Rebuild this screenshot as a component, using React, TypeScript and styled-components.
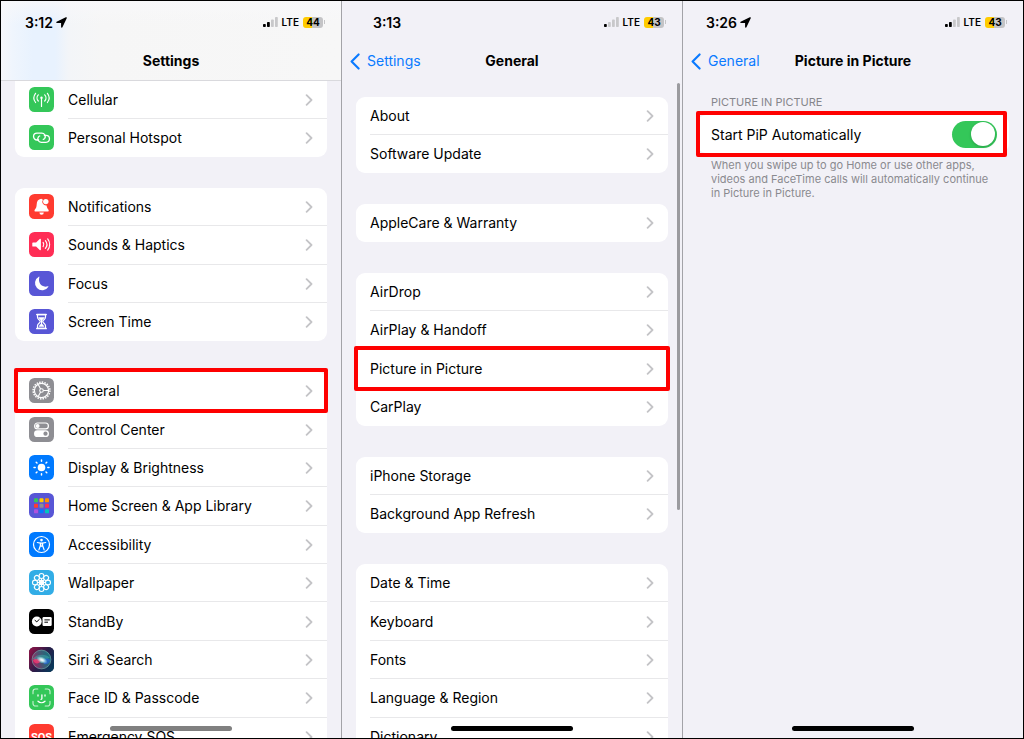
import React, { useState } from 'react';
import styled, { createGlobalStyle, css } from 'styled-components';

const GlobalStyle = createGlobalStyle`
  *, *::before, *::after { box-sizing: border-box; }
  body {
    margin: 0;
    background: #000;
    color: #000;
    font-family: Inter, "Liberation Sans", sans-serif;
    font-size: 14px;
    -webkit-font-smoothing: antialiased;
  }
  ul { list-style: none; margin: 0; padding: 0; }
  h1, h2, p { margin: 0; }
  a { color: inherit; text-decoration: none; }
`;

const Board = styled.div`
  display: grid;
  grid-template-columns: repeat(3, minmax(0, 1fr));
  gap: 1px;
  height: 100vh;
  border: 1px solid #000;
  background: #a3a3a8;
`;

const Screen = styled.section`
  position: relative;
  display: flex;
  flex-direction: column;
  min-width: 0;
  overflow: hidden;
  background: #f2f1f7;
`;

const TopBar = styled.header<{ $frosted?: boolean }>`
  flex: none;
  padding-top: 11px;
  border-bottom: 1px solid transparent;
  ${(p) =>
    p.$frosted &&
    css`
      background:
        linear-gradient(180deg, rgba(248, 248, 250, 0.8) 0, rgba(248, 248, 250, 0) 24px),
        linear-gradient(90deg, #f6f7fc 0, #eff5fd 12px, #e8f2fe 32px, #e8f2fe 54px, #f3f5f8 68px, #f6f6f6 100px, #f7f7f7 100%);
      border-bottom-color: #d9d9dd;
    `}
`;

const StatusBar = styled.div<{ $inset: number }>`
  display: flex;
  align-items: center;
  justify-content: space-between;
  height: 20px;
  padding: 0 16px 0 ${(p) => p.$inset}px;
`;

const Clock = styled.span`
  display: flex;
  align-items: center;
  gap: 3px;
  font-weight: 600;
`;

const StatusIcons = styled.span`
  display: flex;
  align-items: center;
  gap: 4px;
`;

const Carrier = styled.span`
  font-size: 10px;
  font-weight: 600;
`;

const BatteryWrap = styled.span`
  display: flex;
  align-items: center;
  gap: 1px;
  &::after {
    content: '';
    width: 1px;
    height: 4px;
    background: #c4c4c6;
  }
`;

const Battery = styled.span`
  display: flex;
  align-items: center;
  justify-content: center;
  width: 20px;
  height: 11px;
  border-radius: 3px;
  background: linear-gradient(90deg, #ffcc00 45%, #c4c4c6 45%);
  font-size: 10px;
  font-weight: 700;
  line-height: 11px;
`;

const NavBar = styled.nav`
  display: grid;
  grid-template-columns: 1fr auto 1fr;
  align-items: center;
  height: 38px;
  margin-top: 10px;
  padding: 0 8px;
`;

const NavTitle = styled.h1`
  grid-column: 2;
  font-size: 14px;
  font-weight: 700;
  line-height: 20px;
`;

const BackLink = styled.a`
  grid-column: 1;
  display: flex;
  align-items: center;
  gap: 7px;
  color: #0a7aff;
  line-height: 20px;
`;

const Content = styled.main<{ $top?: number }>`
  display: flex;
  flex: 1;
  flex-direction: column;
  gap: 31px;
  min-height: 0;
  padding: ${(p) => p.$top ?? 0}px 14px 0;
`;

// Five rows take 192px; the rows of a group share its height evenly.
const Group = styled.ul<{ $rows: number; $openTop?: boolean }>`
  display: grid;
  grid-auto-rows: 1fr;
  flex: none;
  min-height: ${(p) => Math.floor((p.$rows * 192) / 5)}px;
  border-radius: ${(p) => (p.$openTop ? '0 0 9px 9px' : '9px')};
  background: #fff;
`;

// $mark is the inset of the red frame round a highlighted row.
const Row = styled.li<{ $mark?: string }>`
  position: relative;
  display: flex;
  ${(p) =>
    p.$mark &&
    css`
      &::after {
        content: '';
        position: absolute;
        z-index: 1;
        inset: ${p.$mark};
        border: 4px solid #fe0000;
        border-radius: 2px;
        background: transparent;
        pointer-events: none;
      }
    `}
`;

const RowLink = styled.a`
  display: flex;
  flex: 1;
  min-width: 0;
  padding-left: 14px;
`;

const IconSlot = styled.span`
  display: flex;
  align-items: center;
  width: 39px;
  padding-bottom: 1px;
`;

const RowBody = styled.span<{ $divided: boolean }>`
  display: flex;
  flex: 1;
  align-items: center;
  justify-content: space-between;
  padding: 1px 14px 0 0;
  border-bottom: 1px solid ${(p) => (p.$divided ? '#e8e8ea' : 'transparent')};
  line-height: 20px;
  white-space: nowrap;
`;

const HomeIndicator = styled.div<{ $dim?: boolean }>`
  position: absolute;
  z-index: 2;
  bottom: 7px;
  left: 50%;
  width: 122px;
  height: 5px;
  border-radius: 3px;
  background: ${(p) => (p.$dim ? '#808080' : '#000')};
  transform: translateX(-50%);
`;

const ScrollThumb = styled.div`
  position: absolute;
  top: 82px;
  right: 2px;
  width: 3px;
  height: 427px;
  border-radius: 2px;
  background: #9b9b9f;
`;

const Section = styled.section`
  display: flex;
  flex-direction: column;
`;

const SectionLabel = styled.h2`
  padding: 0 14px;
  color: #86868b;
  font-size: 11px;
  font-weight: 400;
  line-height: 14px;
  margin-bottom: 6px;
`;

const SectionNote = styled.p`
  padding: 5px 14px 0;
  color: #8a8a8f;
  font-size: 11px;
  line-height: 14px;
`;

const SwitchRow = styled.label`
  display: flex;
  flex: 1;
  align-items: center;
  justify-content: space-between;
  padding: 0 12px 0 14px;
`;

const Switch = styled.input`
  appearance: none;
  display: flex;
  align-items: center;
  width: 45px;
  height: 27px;
  margin: 0;
  padding: 0 2px;
  border-radius: 14px;
  background: #e9e9ea;
  &::before {
    content: '';
    width: 24px;
    height: 24px;
    border-radius: 50%;
    background: #fff;
    box-shadow: 0 1px 3px rgba(0, 0, 0, 0.2);
  }
  &:checked {
    justify-content: flex-end;
    background: #34c759;
  }
`;

const Chevron = () => (
  <svg width="8" height="12" viewBox="0 0 8 12" fill="none" stroke="#c4c4c7" strokeWidth="1.8" strokeLinecap="round" strokeLinejoin="round" aria-hidden="true">
    <path d="M1.600 1.200 6.500 6 1.600 10.800" />
  </svg>
);

const BackChevron = () => (
  <svg width="10" height="17" viewBox="0 0 10 17" fill="none" stroke="#0a7aff" strokeWidth="2.1" strokeLinecap="round" strokeLinejoin="round" aria-hidden="true">
    <path d="M8.6 1.4 1.6 8.5l7 7.1" />
  </svg>
);

const LocationArrow = () => (
  <svg width="11" height="11" viewBox="0 0 11 11" aria-hidden="true">
    <path d="M10.100.9.900 5.300h4.900V10z" fill="#000" stroke="#000" strokeWidth="1.400" strokeLinejoin="round" />
  </svg>
);

const Signal = ({ level }: { level: number }) => (
  <svg width="15" height="10" viewBox="0 0 15 10" aria-hidden="true">
    {[3, 5, 7.5, 10].map((h, i) => (
      <rect key={h} x={i * 4} y={10 - h} width="2.8" height={h} rx=".8" fill={i < level ? '#000' : '#c8c8ca'} />
    ))}
  </svg>
);

const tiles: Record<string, [string, React.ReactNode]> = {
  cellular: [
    '#34c759',
    <g fill="none" stroke="#fff" strokeWidth="1.2" strokeLinecap="round">
      <path d="M12.5 11.5v8" />
      <circle cx="12.5" cy="10.800" r="1.200" fill="#fff" stroke="none" />
      <path d="M9.300 7.800a4.500 4.500 0 0 0 0 6.200M15.700 7.800a4.500 4.500 0 0 1 0 6.200M6.600 6.300a7.400 7.400 0 0 0 0 9.200M18.400 6.300a7.400 7.400 0 0 1 0 9.200" />
    </g>,
  ],
  hotspot: [
    '#34c759',
    <g fill="none" stroke="#fff" strokeWidth="1.3" strokeLinecap="round">
      <path d="M9.6 15H8a3.4 3.4 0 0 1 0-6.9h4.8a3.4 3.4 0 0 1 2.9 5.2 3.1 3.1 0 0 1-1.4 1.1" />
      <path d="M15.4 10.4H17a3.4 3.4 0 0 1 0 6.9h-4.8a3.4 3.4 0 0 1-2.9-5.2 3.1 3.1 0 0 1 1.4-1.1" />
    </g>,
  ],
  notifications: [
    '#ff3b30',
    <g fill="#fff">
      <path d="M12.2 4.8c-3.2.4-4.4 2.7-4.5 5.4-.1 2.8-.7 4-1.8 5.3-.8 1-.4 2.1.7 2.1h12c1.1 0 1.5-1.1.7-2.1-.9-1.1-1.5-2.1-1.7-4a3.8 3.8 0 0 1-3.7-5.8z" />
      <path d="M10.4 18.6h4.4a2.2 2.2 0 0 1-4.4 0z" />
      <circle cx="16.8" cy="7.6" r="2.7" />
    </g>,
  ],
  sounds: [
    '#ff2d55',
    <g>
      <path d="M4 10.4h3.1l3.6-3.3c.6-.5 1.2-.2 1.2.5v9.8c0 .7-.6 1-1.2.5l-3.6-3.3H4a.7.7 0 0 1-.7-.7v-2.8a.7.7 0 0 1 .7-.7z" fill="#fff" />
      <path d="M14.1 10.4a3.6 3.6 0 0 1 0 4.2M16.4 8.6a6.2 6.2 0 0 1 0 7.8M18.7 6.9a9.2 9.2 0 0 1 0 11.2" fill="none" stroke="#fff" strokeWidth="1.2" strokeLinecap="round" />
    </g>,
  ],
  focus: [
    '#5856d6',
    <path d="M9.8 5.7a7.2 7.2 0 1 0 9.6 10c.2-.4-.1-.7-.5-.5-5.700 2-10.300-3-8.500-9.100.1-.4-.2-.7-.6-.4z" fill="#fff" />,
  ],
  screentime: [
    '#5856d6',
    <g>
      <path d="M8.500 5.700h8v2.600c0 2-2.800 2.700-2.800 4.200s2.800 2.200 2.800 4.200v2.600h-8v-2.600c0-2 2.800-2.700 2.800-4.200s-2.800-2.200-2.800-4.200z" fill="none" stroke="#fff" strokeWidth="1.200" />
      <path d="M7.900 5.500h9.200M7.900 19.500h9.200" stroke="#fff" strokeWidth="1.700" strokeLinecap="round" />
      <path d="M9.200 8.300h6.600c-.6 1.700-2.600 2.200-2.800 4v2.200c.3.900 1.900 1.500 2.300 3.300H9.700c.4-1.800 2-2.400 2.300-3.300v-2.200c-.2-1.800-2.200-2.300-2.800-4z" fill="#fff" />
    </g>,
  ],
  general: [
    '#8e8e93',
    <g fill="none" stroke="#fff">
      <circle cx="12.500" cy="12.500" r="8.400" strokeWidth="1.500" strokeDasharray="1.500 1.139" />
      <circle cx="12.500" cy="12.500" r="7.100" strokeWidth="1.200" />
      <circle cx="12.500" cy="12.500" r="1.800" strokeWidth="1.100" />
      <path d="M14.300 12.500h5M11.600 10.900 9.200 6.600M11.600 14.100l-2.400 4.300" strokeWidth="1.100" />
    </g>,
  ],
  control: [
    '#8e8e93',
    <g>
      <rect x="5.600" y="6" width="13.800" height="5.800" rx="2.900" fill="none" stroke="#fff" strokeWidth="1.200" />
      <circle cx="8.600" cy="8.900" r="2" fill="#fff" />
      <rect x="5" y="13.200" width="15" height="6.900" rx="3.450" fill="#fff" />
      <circle cx="16.500" cy="16.650" r="2.100" fill="#8e8e93" />
    </g>,
  ],
  display: [
    '#007aff',
    <g stroke="#fff" strokeWidth="1.500" strokeLinecap="round">
      <circle cx="12.500" cy="12.500" r="3.800" fill="#fff" stroke="none" />
      <path d="M12.500 5v1.200M12.500 18.800v1.200M5 12.500h1.200M18.800 12.500h1.200M7.200 7.200l.8.800M17 17l.8.800M7.200 17.800l.8-.8M17 8l.8-.8" />
    </g>,
  ],
  home: [
    '#5856d6',
    <g>
      {['#34c759', '#ffcc00', '#ff9500', '#ff3b30', '#8e8e93', '#ff2d55', '#af52de', '#007aff', '#00c7be'].map((c, i) => (
        <rect key={c} x={5 + (i % 3) * 5.500} y={5.300 + Math.floor(i / 3) * 5.500} width="4" height="4" rx=".9" fill={c} />
      ))}
    </g>,
  ],
  accessibility: [
    '#007aff',
    <g fill="none" stroke="#fff" strokeLinecap="round" strokeLinejoin="round">
      <circle cx="12.500" cy="12.500" r="8" strokeWidth="1.200" />
      <circle cx="12.500" cy="8.100" r="1.300" fill="#fff" stroke="none" />
      <path d="M8.300 10.500l3.100.6v2.400l-1.500 4.400M16.700 10.500l-3.100.6v2.400l1.500 4.400M11.600 11.100h1.800v3h-1.800z" strokeWidth="1.200" />
    </g>,
  ],
  wallpaper: [
    '#32ade6',
    <g fill="none" stroke="#fff" strokeWidth="1.100">
      {[0, 45, 90, 135, 180, 225, 270, 315].map((a) => (
        <g key={a} transform={`rotate(${a} 12.500 12.500)`}>
          <ellipse cx="12.500" cy="6" rx="2.400" ry="2.500" />
          <path d="M12.500 8.500v4" />
        </g>
      ))}
      <circle cx="12.500" cy="12.500" r="2.200" />
    </g>,
  ],
  standby: [
    '#000',
    <g>
      <circle cx="7.800" cy="12.500" r="4.900" fill="#fff" />
      <path d="m6 11.400 1.800 1.400 2.500-2.400" fill="none" stroke="#000" strokeWidth="1" strokeLinecap="round" />
      <rect x="13.500" y="8" width="9.200" height="9" rx="1.200" fill="#fff" />
      <path d="M15.400 10.900h5.400M15.400 13.200h3.600" stroke="#000" strokeWidth="1" />
    </g>,
  ],
  siri: [
    '#20183a',
    <g>
      <defs>
        <linearGradient id="siriBack" x1="0" y1=".2" x2="1" y2=".8">
          <stop offset="0" stopColor="#8a1346" />
          <stop offset=".5" stopColor="#2a1b48" />
          <stop offset="1" stopColor="#063a5a" />
        </linearGradient>
        <linearGradient id="siriOrb" x1="0" y1=".7" x2="1" y2=".3">
          <stop offset="0" stopColor="#c82468" />
          <stop offset=".45" stopColor="#4f6580" />
          <stop offset="1" stopColor="#128f92" />
        </linearGradient>
        <radialGradient id="siriGlow">
          <stop offset="0" stopColor="#fff" />
          <stop offset=".35" stopColor="#eff" stopOpacity=".8" />
          <stop offset="1" stopColor="#9ff" stopOpacity="0" />
        </radialGradient>
      </defs>
      <rect width="25" height="25" rx="5.500" fill="url(#siriBack)" />
      <circle cx="12.500" cy="12.500" r="9.400" fill="url(#siriOrb)" opacity=".75" />
      <circle cx="12.500" cy="12.500" r="9.400" fill="none" stroke="#6fa8a8" strokeWidth=".8" opacity=".8" />
      <path d="M3.500 12c4-5 13-6 17.500-1-4 .5-6 5-9 5s-5-3-8.500-4z" fill="#3fc6bd" opacity=".4" />
      <path d="M14 13c3-2.500 6-1.500 7.500 0-1 3.500-4 5-6.500 4z" fill="#2565d8" opacity=".7" />
      <path d="M4 13.500c2-2 5-2 8 .5-2 3-6 3.500-8-.5z" fill="#ff3570" opacity=".75" />
      <ellipse cx="13" cy="13" rx="6" ry="3.200" transform="rotate(25 13 13)" fill="url(#siriGlow)" />
    </g>,
  ],
  faceid: [
    '#34c759',
    <g fill="none" stroke="#fff" strokeWidth="1.100" strokeLinecap="round">
      <path d="M4 8.800V6.500A2.500 2.500 0 0 1 6.500 4h2.300M16.200 4h2.300A2.500 2.500 0 0 1 21 6.500v2.300M21 16.200v2.300a2.500 2.500 0 0 1-2.500 2.500h-2.300M8.800 21H6.500A2.500 2.500 0 0 1 4 18.500v-2.300" opacity=".75" />
      <path d="M9 9.800v1.200M16 9.800v1.200M12.900 9.800v3.700c0 .5-.3.800-.9.800M9 16.200c2 1.900 5 1.900 7 0" strokeWidth="1.300" />
    </g>,
  ],
  sos: [
    '#ff3b30',
    <text x="12.500" y="17" textAnchor="middle" fill="#fff" fontFamily="Roboto, sans-serif" fontSize="11" fontWeight="700">SOS</text>,
  ],
};

const Tile = ({ name }: { name: string }) => {
  const [color, art] = tiles[name];
  return (
    <svg width="25" height="25" viewBox="0 0 25 25" aria-hidden="true">
      <rect width="25" height="25" rx="5.500" fill={color} />
      {art}
    </svg>
  );
};

type Item = { label: string; icon?: string; mark?: string };

const settingsGroups: Item[][] = [
  [
    { label: 'Cellular', icon: 'cellular' },
    { label: 'Personal Hotspot', icon: 'hotspot' },
  ],
  [
    { label: 'Notifications', icon: 'notifications' },
    { label: 'Sounds & Haptics', icon: 'sounds' },
    { label: 'Focus', icon: 'focus' },
    { label: 'Screen Time', icon: 'screentime' },
  ],
  [
    { label: 'General', icon: 'general', mark: '-4px -1px -3px' },
    { label: 'Control Center', icon: 'control' },
    { label: 'Display & Brightness', icon: 'display' },
    { label: 'Home Screen & App Library', icon: 'home' },
    { label: 'Accessibility', icon: 'accessibility' },
    { label: 'Wallpaper', icon: 'wallpaper' },
    { label: 'StandBy', icon: 'standby' },
    { label: 'Siri & Search', icon: 'siri' },
    { label: 'Face ID & Passcode', icon: 'faceid' },
    { label: 'Emergency SOS', icon: 'sos' },
  ],
];

const generalGroups: Item[][] = [
  [{ label: 'About' }, { label: 'Software Update' }],
  [{ label: 'AppleCare & Warranty' }],
  [{ label: 'AirDrop' }, { label: 'AirPlay & Handoff' }, { label: 'Picture in Picture', mark: '-4px -2px -3px' }, { label: 'CarPlay' }],
  [{ label: 'iPhone Storage' }, { label: 'Background App Refresh' }],
  [{ label: 'Date & Time' }, { label: 'Keyboard' }, { label: 'Fonts' }, { label: 'Language & Region' }, { label: 'Dictionary' }],
];

const ItemGroup = ({ items, openTop }: { items: Item[]; openTop?: boolean }) => (
  <Group $rows={items.length} $openTop={openTop}>
    {items.map((item, i) => (
      <Row key={item.label} $mark={item.mark}>
        <RowLink href="#">
          {item.icon && (
            <IconSlot>
              <Tile name={item.icon} />
            </IconSlot>
          )}
          <RowBody $divided={i < items.length - 1}>
            {item.label}
            <Chevron />
          </RowBody>
        </RowLink>
      </Row>
    ))}
  </Group>
);

type HeaderProps = {
  time: string;
  inset: number;
  level: number;
  battery: number;
  title: string;
  back?: string;
  located?: boolean;
  frosted?: boolean;
};

const Header = ({ time, inset, level, battery, title, back, located, frosted }: HeaderProps) => (
  <TopBar $frosted={frosted}>
    <StatusBar $inset={inset}>
      <Clock>
        {time}
        {located && <LocationArrow />}
      </Clock>
      <StatusIcons>
        <Signal level={level} />
        <Carrier>LTE</Carrier>
        <BatteryWrap>
          <Battery>{battery}</Battery>
        </BatteryWrap>
      </StatusIcons>
    </StatusBar>
    <NavBar>
      {back && (
        <BackLink href="#">
          <BackChevron />
          {back}
        </BackLink>
      )}
      <NavTitle>{title}</NavTitle>
    </NavBar>
  </TopBar>
);

export default function App() {
  const [autoStart, setAutoStart] = useState(true);
  return (
    <>
      <GlobalStyle />
      <Board>
        <Screen>
          <Header time="3:12" inset={24} level={2} battery={44} title="Settings" located frosted />
          <Content>
            {settingsGroups.map((items, i) => (
              <ItemGroup key={items[0].label} items={items} openTop={i === 0} />
            ))}
          </Content>
          <HomeIndicator $dim />
        </Screen>

        <Screen>
          <Header time="3:13" inset={31} level={1} battery={43} title="General" back="Settings" />
          <Content $top={16}>
            {generalGroups.map((items) => (
              <ItemGroup key={items[0].label} items={items} />
            ))}
          </Content>
          <ScrollThumb />
          <HomeIndicator />
        </Screen>

        <Screen>
          <Header time="3:26" inset={23} level={2} battery={43} title="Picture in Picture" back="General" located />
          <Content $top={14}>
            <Section>
              <SectionLabel>PICTURE IN PICTURE</SectionLabel>
              <Group as="div" $rows={1}>
                <Row as="div" $mark="-4px 2px -4px -1px">
                  <SwitchRow>
                    Start PiP Automatically
                    <Switch type="checkbox" role="switch" checked={autoStart} onChange={(e) => setAutoStart(e.target.checked)} />
                  </SwitchRow>
                </Row>
              </Group>
              <SectionNote>
                When you swipe up to go Home or use other apps, videos and FaceTime calls will automatically continue in Picture in Picture.
              </SectionNote>
            </Section>
          </Content>
          <HomeIndicator />
        </Screen>
      </Board>
    </>
  );
}
